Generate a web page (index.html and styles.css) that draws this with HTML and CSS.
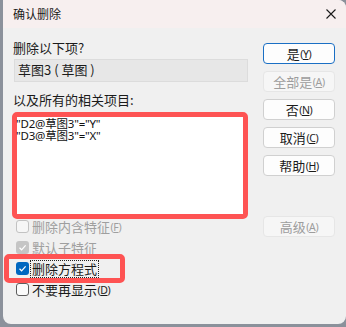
FILE: index.html
```html
<!DOCTYPE html>
<html lang="zh">
<head>
<meta charset="utf-8">
<link rel="stylesheet" href="styles.css">
</head>
<body>
<div class="dialog">
  <div class="titlebar">
    <span class="title">确认删除</span>
    <svg class="close" width="10" height="10" viewBox="0 0 10 10"><path d="M0.5 0.5 L9.5 9.5 M9.5 0.5 L0.5 9.5" stroke="#1a1a1a" stroke-width="1.1" fill="none"/></svg>
  </div>
  <div class="body">
    <div class="left">
      <div class="label l1">删除以下项?</div>
      <div class="field">草图3 ( 草图 )</div>
      <div class="label l2">以及所有的相关项目:</div>
      <div class="list">
        <div class="item">"D2@草图3"="Y"</div>
        <div class="item">"D3@草图3"="X"</div>
      </div>
      <div class="checks">
        <div class="check disabled"><span class="box"></span><span class="text">删除内含特征<span class="mn">(<u>F</u>)</span></span></div>
        <div class="check disabled"><span class="box checked"><svg viewBox="0 0 13 13" width="13" height="13"><path d="M3.5 6.8 L5.6 8.8 L9.6 4.4" stroke="#fff" stroke-width="1.2" fill="none"/></svg></span><span class="text">默认子特征</span></div>
        <div class="check marked"><span class="box checked blue"><svg viewBox="0 0 13 13" width="13" height="13"><path d="M3.5 6.8 L5.6 8.8 L9.6 4.4" stroke="#fff" stroke-width="1.2" fill="none"/></svg></span><span class="text focus">删除方程式</span></div>
        <div class="check"><span class="box"></span><span class="text">不要再显示<span class="mn">(<u>D</u>)</span></span></div>
      </div>
    </div>
    <div class="right">
      <div class="btn default">是<span class="mn">(<u>Y</u>)</span></div>
      <div class="btn off">全部是<span class="mn">(<u>A</u>)</span></div>
      <div class="btn">否<span class="mn">(<u>N</u>)</span></div>
      <div class="btn">取消<span class="mn">(<u>C</u>)</span></div>
      <div class="btn">帮助<span class="mn">(<u>H</u>)</span></div>
      <div class="btn off adv">高级<span class="mn">(<u>A</u>)</span></div>
    </div>
  </div>
</div>
</body>
</html>
```

FILE: styles.css
```css
html, body {
  margin: 0;
  padding: 0;
}
body {
  width: 346px;
  height: 327px;
  background: #8b919b;
  font-family: "Noto Sans", "Noto Sans CJK SC", sans-serif;
  color: #1b1b1b;
  overflow: hidden;
}
.dialog {
  margin-left: 3px;
  width: 343px;
  height: 324px;
  background: #f0f0f0;
  border-radius: 0 8px 8px 8px;
  overflow: hidden;
}
.titlebar {
  height: 28px;
  background: #f7efef;
  display: flex;
  align-items: center;
  justify-content: space-between;
  padding: 0 10px 0 10px;
}
.title {
  font-family: "Noto Sans CJK SC", sans-serif;
  font-size: 12px;
  line-height: 16px;
  color: #1a1a1a;
}
.close {
  display: block;
  margin-right: 0;
}
.body {
  display: flex;
  padding: 12px 11px 0 10px;
  gap: 15px;
}
.left {
  width: 235px;
  display: flex;
  flex-direction: column;
}
.label {
  font-family: "Noto Sans CJK SC", sans-serif;
  font-size: 13px;
  line-height: 16px;
  height: 16px;
}
.field {
  margin-top: 3px;
  height: 23px;
  box-sizing: border-box;
  border: 1px solid #dcdcdc;
  background: #e7e7e7;
  font-family: "Noto Sans CJK SC", sans-serif;
  font-size: 13px;
  line-height: 20px;
  padding-left: 3px;
  margin-left: 1px;
}
.l2 {
  margin-top: 10px;
}
.list {
  margin-top: 4px;
  margin-left: -1px;
  width: 236px;
  height: 107px;
  box-sizing: border-box;
  border: 5px solid #fe5353;
  border-radius: 5px;
  background: #ffffff;
  padding-top: 1px;
}
.item {
  font-size: 11.5px;
  line-height: 12px;
  height: 12px;
  letter-spacing: -0.2px;
  color: #111;
  margin-left: -1px;
  overflow: visible;
}
.checks {
  margin-top: -3px;
  display: flex;
  flex-direction: column;
}
.check {
  height: 21px;
  display: flex;
  align-items: center;
  padding-left: 3px;
  position: relative;
}
.box {
  width: 13px;
  height: 13px;
  box-sizing: border-box;
  border: 1px solid #5d5d5d;
  border-radius: 3px;
  background: #fbfbfb;
  flex: none;
  display: flex;
  align-items: center;
  justify-content: center;
}
.box svg {
  display: block;
  flex: none;
}
.box.checked {
  border: none;
  background: #0067c0;
}
.disabled .box {
  border-color: #c2c2c2;
  background: #f6f6f6;
}
.disabled .box.checked {
  background: #c5c5c5;
}
.text {
  margin-left: 3px;
  font-family: "Noto Sans CJK SC", sans-serif;
  font-size: 13px;
  line-height: 16px;
  color: #1b1b1b;
  display: flex;
  align-items: center;
}
.disabled .text {
  color: #9f9f9f;
}
.text.focus {
  outline: 1px dotted #222;
  outline-offset: 0px;
  margin-left: 2px;
  padding: 0 1px;
}
.marked::before {
  content: "";
  position: absolute;
  left: -9px;
  top: -4px;
  width: 121px;
  height: 29px;
  box-sizing: border-box;
  border: 5px solid #fe5353;
  border-radius: 5px;
}
.mn {
  font-family: "Noto Sans", sans-serif;
  font-size: 10.5px;
  letter-spacing: -0.4px;
  margin-left: 0.5px;
}
.mn u {
  text-decoration-thickness: 1px;
  text-underline-offset: 1px;
}
.right {
  width: 72px;
  display: flex;
  flex-direction: column;
  gap: 7px;
  padding-top: 3px;
}
.btn {
  height: 21px;
  box-sizing: border-box;
  border: 1px solid #d0d0d0;
  border-radius: 4px;
  background: #fdfdfd;
  display: flex;
  align-items: center;
  justify-content: center;
  font-family: "Noto Sans CJK SC", sans-serif;
  font-size: 13px;
  line-height: 16px;
  color: #1b1b1b;
}
.btn.default {
  border-color: #1a6fc4;
}
.btn.off {
  background: #f6f6f6;
  border-color: #e6e6e6;
  color: #9d9d9d;
}
.btn.adv {
  margin-top: 33px;
}
```
